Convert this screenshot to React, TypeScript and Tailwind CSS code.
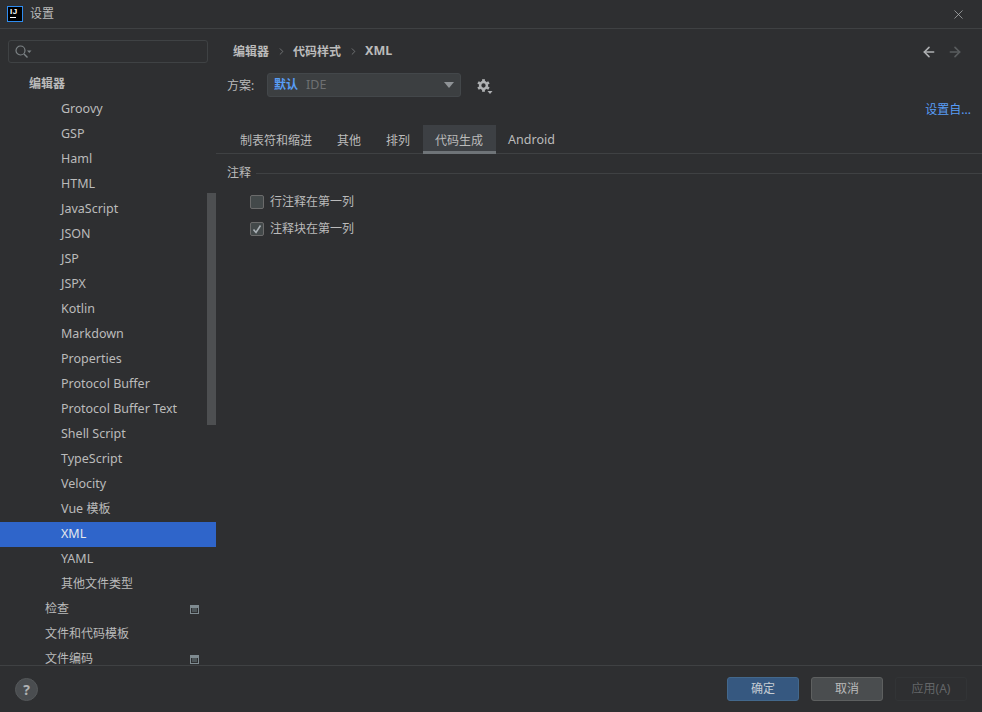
import { ArrowLeft, ArrowRight, ChevronRight, X } from 'lucide-react';

const languages = [
  'Groovy', 'GSP', 'Haml', 'HTML', 'JavaScript', 'JSON', 'JSP', 'JSPX', 'Kotlin', 'Markdown',
  'Properties', 'Protocol Buffer', 'Protocol Buffer Text', 'Shell Script', 'TypeScript', 'Velocity',
];

const fontStack = "font-['Noto_Sans','Noto_Sans_CJK_SC',sans-serif]";

// 小方块图标 (项目级设置)
function SettingBadge() {
  return (
    <svg width="9" height="9" viewBox="0 0 9 9" className="mr-[17px] shrink-0">
      <rect x="0.5" y="0.5" width="8" height="8" fill="none" stroke="#7f8b91" />
      <rect x="1" y="1" width="7" height="2" fill="#7f8b91" />
      <rect x="2" y="3" width="5" height="4" fill="#4d5558" />
    </svg>
  );
}

function GearIcon() {
  return (
    <svg width="16" height="16" viewBox="0 0 16 16" className="ml-[16px] mt-[1px]" fill="none" stroke="#afb1b3">
      <circle cx="6.5" cy="6.5" r="3.4" strokeWidth="2.5" />
      {[0, 60, 120, 180, 240, 300].map((a) => (
        <path key={a} d="M6.5 0.2v2.300" strokeWidth="2.8" transform={`rotate(${a} 6.500 6.500)`} />
      ))}
      <path d="M10.500 12h5L13 15z" fill="#afb1b3" stroke="none" />
    </svg>
  );
}

function TreeRow({ label, indent, selected, bold, badge, cjk }: { label: React.ReactNode; indent: string; selected?: boolean; bold?: boolean; badge?: boolean; cjk?: boolean }) {
  return (
    <div className={`h-[25px] shrink-0 flex items-center justify-between ${indent} ${selected ? 'bg-[#2f65ca] text-[#e4e8ec]' : 'text-[#bbbbbb]'} ${bold ? 'font-bold' : ''} ${cjk ? 'text-[12px]' : 'text-[12.5px]'}`}>
      <span className={cjk ? 'mb-[2px]' : ''}>{label}</span>
      {badge && <SettingBadge />}
    </div>
  );
}

function Sidebar() {
  return (
    <div className="relative w-[216px] shrink-0 flex flex-col overflow-hidden">
      <div className="px-2 pt-[11px] pb-[8px] shrink-0">
        <div className="h-[23px] border border-[#3f4244] rounded-[3px] flex items-center pl-[6px]">
          <svg width="17" height="14" viewBox="0 0 17 14" fill="none">
            <circle cx="5.5" cy="5.5" r="4.5" stroke="#7d8386" strokeWidth="1.2" />
            <path d="M9 9l3.5 3.5" stroke="#7d8386" strokeWidth="1.4" />
            <path d="M12 5.5h4.5l-2.250 2.500z" fill="#7d8386" />
          </svg>
        </div>
      </div>
      <div className="flex-1 flex flex-col overflow-hidden pt-[1px]">
        <TreeRow label="编辑器" indent="pl-[29px]" bold cjk />
        {languages.map((l) => (
          <TreeRow key={l} label={l} indent="pl-[61px]" />
        ))}
        <TreeRow label={<>Vue <span className="text-[12px]">模板</span></>} indent="pl-[61px]" />
        <TreeRow label="XML" indent="pl-[61px]" selected />
        <TreeRow label="YAML" indent="pl-[61px]" />
        <TreeRow label={<span className="text-[12px]">其他文件类型</span>} indent="pl-[61px]" />
        <TreeRow label="检查" indent="pl-[45px]" badge cjk />
        <TreeRow label="文件和代码模板" indent="pl-[45px]" cjk />
        <TreeRow label="文件编码" indent="pl-[45px]" badge cjk />
      </div>
      {/* 滚动条 */}
      <div className="absolute right-0 top-[164px] w-[9px] h-[232px] bg-[#4d4f51]" />
    </div>
  );
}

function Tabs() {
  const tabs = ['制表符和缩进', '其他', '排列', '代码生成', 'Android'];
  return (
    <div className="h-[29px] flex border-b border-[#3f4143] pl-[11.5px] text-[12px] text-[#bbbbbb]">
      {tabs.map((t) => (
        <div
          key={t}
          className={`h-[29px] px-[12.5px] pt-[5px] flex items-center border-b-[3px] ${t === '代码生成' ? 'bg-[#3d4044] border-[#6f7478]' : 'border-transparent'} ${t === 'Android' ? 'text-[12.5px]' : ''}`}
        >
          {t}
        </div>
      ))}
    </div>
  );
}

function CheckRow({ label, checked }: { label: string; checked?: boolean }) {
  return (
    <div className="h-[27px] flex items-center gap-[6px] pl-[34px] text-[12px] text-[#bbbbbb]">
      <div className="w-[14px] h-[14px] rounded-[2px] border border-[#6b6b6b] bg-[#43494a] flex items-center justify-center">
        {checked && (
          <svg width="10" height="10" viewBox="0 0 10 10" fill="none">
            <path d="M1.500 5.500L4 8.500 8.500 1.500" stroke="#a9b0b5" strokeWidth="1.6" />
          </svg>
        )}
      </div>
      <span>{label}</span>
    </div>
  );
}

function Content() {
  return (
    <div className="flex-1 min-w-0 flex flex-col">
      <div className="h-[44px] pt-[1px] pl-[17px] pr-[19px] flex items-center text-[12px] font-bold text-[#bbbbbb] shrink-0">
        <span>编辑器</span>
        <ChevronRight size={11} strokeWidth={1.5} className="mx-[6.5px] text-[#8a8d8f]" />
        <span>代码样式</span>
        <ChevronRight size={11} strokeWidth={1.5} className="mx-[6.5px] text-[#8a8d8f]" />
        <span className="text-[12.5px]">XML</span>
        <div className="ml-auto flex gap-[10px]">
          <ArrowLeft size={16} strokeWidth={2.4} className="text-[#afb1b3]" />
          <ArrowRight size={16} strokeWidth={2.4} className="text-[#5a5d5f]" />
        </div>
      </div>
      <div className="h-[26px] flex items-center pl-[11px] text-[12px] text-[#bbbbbb] shrink-0">
        <span className="w-[40px]">方案:</span>
        <div className="w-[194px] h-[24px] mb-[2px] bg-[#3c3f41] border border-[#43474a] rounded-[3px] flex items-center pl-[6px] pr-[6px]">
          <span className="text-[#589df6] font-bold">默认</span>
          <span className="ml-[8px] text-[#6e7072] text-[12.5px]">IDE</span>
          <svg width="10" height="6" viewBox="0 0 10 6" className="ml-auto">
            <path d="M0 0h10L5 6z" fill="#8f9396" />
          </svg>
        </div>
        <GearIcon />
      </div>
      <div className="h-[26px] flex items-center justify-end pr-[11px] pb-[4px] text-[12px] text-[#589df6] shrink-0">
        <span>设置自...</span>
      </div>
      <div className="shrink-0">
        <Tabs />
      </div>
      <div className="pl-[11px] pt-[10px] flex items-center text-[12px] text-[#bbbbbb] shrink-0">
        <span>注释</span>
        <div className="flex-1 h-px bg-[#3f4143] ml-[5px]" />
      </div>
      <div className="pt-[6px]">
        <CheckRow label="行注释在第一列" />
        <CheckRow label="注释块在第一列" checked />
      </div>
    </div>
  );
}

export default function App() {
  return (
    <div className={`w-[982px] h-[712px] bg-[#2e2f31] flex flex-col overflow-hidden ${fontStack}`}>
      {/* 标题栏 */}
      <div className="h-[29px] shrink-0 border-b border-[#3f4143] flex items-center pl-[7px] pr-[16px] text-[12px] text-[#bbbbbb]">
        <div className="w-[16px] h-[16px] border border-[#2f8cf0] bg-black flex flex-col pt-[1px] pl-[2px] mr-[7px]">
          <span className="font-['Liberation_Sans',sans-serif] text-[8px] leading-[8px] font-bold text-white tracking-[0.5px]">IJ</span>
          <span className="w-[6px] h-px bg-white mt-[1px]" />
        </div>
        <span>设置</span>
        <X size={15} strokeWidth={1.2} className="ml-auto text-[#afb1b3]" />
      </div>
      <div className="flex-1 min-h-0 flex">
        <Sidebar />
        <Content />
      </div>
      {/* 底部按钮 */}
      <div className="h-[47px] shrink-0 border-t border-[#3f4143] flex items-center pl-[15px] pr-[15px] text-[12px]">
        <div className="w-[23px] h-[23px] rounded-full bg-[#4a4d50] border border-[#55585a] flex items-center justify-center text-[#b0b2b4] font-bold text-[14px]">?</div>
        <div className="ml-auto flex gap-[12px]">
          <button className="w-[72px] h-[24px] rounded-[3px] bg-[#365880] border border-[#43688c] text-[#c5ccd3]">确定</button>
          <button className="w-[72px] h-[24px] rounded-[3px] bg-[#4a4d4f] border border-[#5e6060] text-[#bbbbbb]">取消</button>
          <button className="w-[72px] h-[24px] rounded-[3px] border border-[#323436] text-[#646668]">应用(A)</button>
        </div>
      </div>
    </div>
  );
}
